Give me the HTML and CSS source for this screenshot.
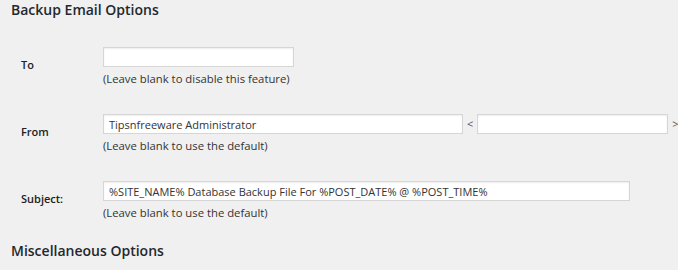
FILE: index.html
```html
<!DOCTYPE html>
<html lang="en">
<head>
  <meta charset="UTF-8">
  <meta name="viewport" content="width=device-width, initial-scale=1.0">
  <title>Backup Email Options</title>
  <link rel="stylesheet" href="styles.css">
</head>
<body>
  <div class="wrap">
    <h2 class="section-title">Backup Email Options</h2>

    <div class="form-rows">
      <div class="form-row">
        <label class="row-label" for="emailTo">To</label>
        <div class="row-field">
          <input type="text" id="emailTo" class="input-short">
          <p class="help">(Leave blank to disable this feature)</p>
        </div>
      </div>

      <div class="form-row">
        <label class="row-label" for="fromName">From</label>
        <div class="row-field">
          <div class="inline-fields">
            <input type="text" id="fromName" class="input-name" value="Tipsnfreeware Administrator">
            <span class="bracket">&lt;</span>
            <input type="text" id="fromEmail" class="input-short">
            <span class="bracket">&gt;</span>
          </div>
          <p class="help">(Leave blank to use the default)</p>
        </div>
      </div>

      <div class="form-row">
        <label class="row-label" for="subject">Subject:</label>
        <div class="row-field">
          <input type="text" id="subject" class="input-long" value="%SITE_NAME% Database Backup File For %POST_DATE% @ %POST_TIME%">
          <p class="help">(Leave blank to use the default)</p>
        </div>
      </div>
    </div>

    <h2 class="section-title next">Miscellaneous Options</h2>
  </div>
</body>
</html>
```

FILE: styles.css
```css
* {
    margin: 0;
    padding: 0;
    box-sizing: border-box;
    font-family: 'Open Sans', 'Noto Sans', sans-serif;
}

body {
    background: #f0f0f0;
    color: #23282d;
}

.wrap {
    padding-left: 11px;
}

.section-title {
    font-size: 14px;
    font-weight: 600;
    line-height: 20px;
    color: #23282d;
}

.section-title.next {
    margin-top: 20px;
}

.form-rows {
    display: flex;
    flex-direction: column;
    gap: 27px;
    margin-top: 27px;
}

.form-row {
    display: grid;
    grid-template-columns: 92px 1fr;
    align-items: center;
}

.row-label {
    padding-left: 10px;
    font-size: 11px;
    font-weight: 600;
    line-height: 16px;
    color: #222;
    position: relative;
    top: -2px;
}

.row-field {
    display: flex;
    flex-direction: column;
    align-items: flex-start;
}

.inline-fields {
    display: flex;
    align-items: center;
    gap: 4px;
}

input[type="text"] {
    height: 20px;
    padding: 0 5px;
    border: 1px solid #d6d6d6;
    background: #fff;
    box-shadow: inset 0 1px 2px rgba(0, 0, 0, 0.07);
    font-size: 11px;
    color: #333;
    outline: none;
}

.input-short {
    width: 191px;
}

.input-name {
    width: 360px;
}

.input-long {
    width: 527px;
}

.bracket {
    font-size: 11px;
    color: #555;
    line-height: 20px;
}

.help {
    margin-top: 4px;
    font-size: 11.3px;
    line-height: 16px;
    color: #333;
}
```
